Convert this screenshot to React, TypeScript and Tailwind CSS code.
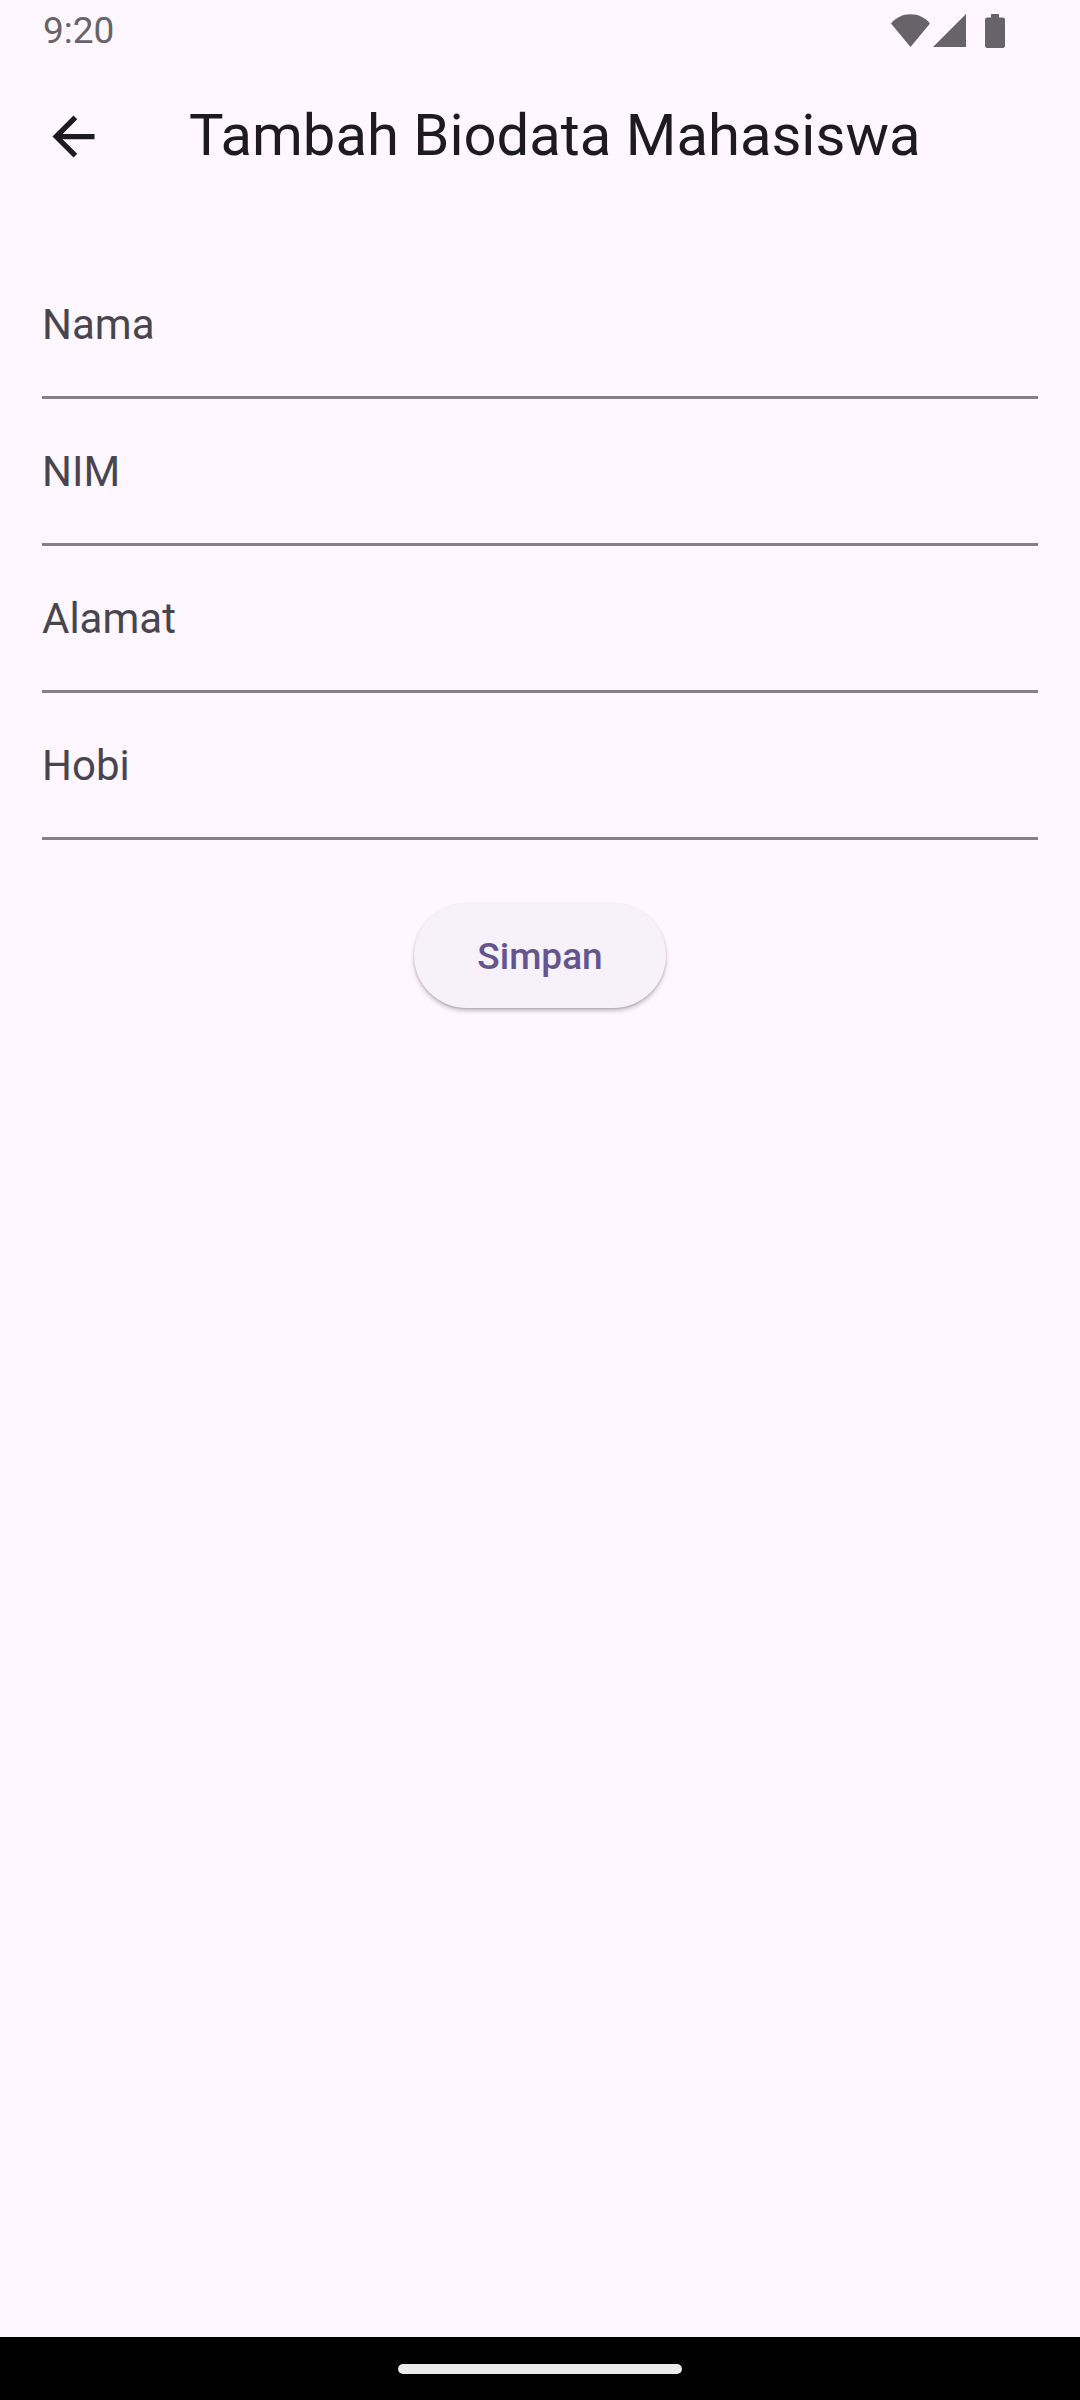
import React from "react";

const fields = [
  { id: "nama", label: "Nama" },
  { id: "nim", label: "NIM" },
  { id: "alamat", label: "Alamat" },
  { id: "hobi", label: "Hobi" },
];

function StatusBar() {
  return (
    <div className="flex h-[63px] items-center justify-between pr-[75px] pb-px pl-[43px] text-[#676469]">
      <span className="text-[37px] leading-[44px]">9:20</span>
      <div className="flex items-center" aria-hidden="true">
        <svg className="mr-[3px] h-[34px] w-10" viewBox="0 0 40 34" fill="currentColor">
          <path d="M1 9.500C6 3.600 12.500 0.300 20.500 0.300S35 3.600 40 9.500L20.500 33Z" />
        </svg>
        <svg className="mr-[19px] h-[34px] w-[33px]" viewBox="0 0 33 34" fill="currentColor">
          <path d="M33 0V33H0Z" />
        </svg>
        <svg className="h-[34px] w-5" viewBox="0 0 20 34" fill="currentColor">
          <path d="M6 0H14V3.500H17.500Q20 3.500 20 6V31.500Q20 34 17.500 34H2.500Q0 34 0 31.500V6Q0 3.500 2.500 3.500H6Z" />
        </svg>
      </div>
    </div>
  );
}

function TextField({ id, label }: { id: string; label: string }) {
  return (
    <div className="grid h-[147px] border-b-[3px] border-[#867f88] text-[42px] leading-[48px]">
      <input
        id={id}
        name={id}
        type="text"
        placeholder=" "
        className="peer col-start-1 row-start-1 w-full bg-transparent text-[#1d1b20] outline-none"
      />
      <label
        htmlFor={id}
        className="pointer-events-none col-start-1 row-start-1 self-center justify-self-start pt-[2px] text-[#49454f] peer-focus:self-start peer-focus:text-[32px] peer-[:not(:placeholder-shown)]:self-start peer-[:not(:placeholder-shown)]:text-[32px]"
      >
        {label}
      </label>
    </div>
  );
}

export default function App() {
  return (
    <div className="flex min-h-screen flex-col bg-[#fef7ff] font-['Roboto',sans-serif]">
      <StatusBar />
      <header className="flex h-[147px] items-center pl-[42px] text-[#1d1b20]">
        <button type="button" aria-label="Kembali" className="mr-[84px]">
          <svg className="size-[63px]" viewBox="0 0 24 24" fill="currentColor">
            <path d="M20 11H7.830l5.590-5.590L12 4l-8 8 8 8 1.410-1.410L7.830 13H20v-2z" />
          </svg>
        </button>
        <h1 className="pb-1 text-[58px] leading-[72px]">Tambah Biodata Mahasiswa</h1>
      </header>
      <form
        className="flex flex-1 flex-col px-[42px] pt-[42px]"
        onSubmit={(event) => event.preventDefault()}
      >
        {fields.map((field) => (
          <TextField key={field.id} id={field.id} label={field.label} />
        ))}
        <button
          type="submit"
          className="mt-[63px] h-[105px] self-center rounded-full bg-[#f7f2fa] px-[63px] pt-[2px] text-[37px] leading-[52px] font-medium text-[#65558f] shadow-[0_3px_4px_rgba(0,0,0,0.22),0_1px_2px_rgba(0,0,0,0.14)]"
        >
          Simpan
        </button>
      </form>
      <div className="flex h-[63px] items-center justify-center bg-black">
        <div className="h-[10px] w-[284px] rounded-full bg-[#ebebeb]" />
      </div>
    </div>
  );
}
